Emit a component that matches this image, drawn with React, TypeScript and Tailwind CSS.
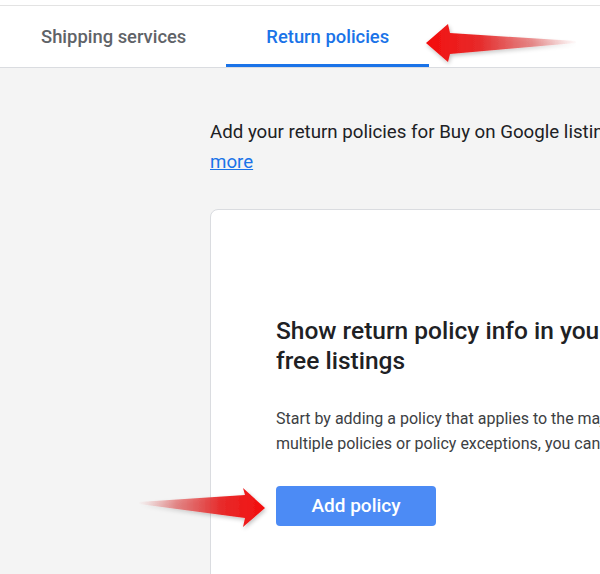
import React from "react";

function Arrows() {
  return (
    <svg
      className="absolute left-0 top-0 pointer-events-none"
      width="600"
      height="574"
      viewBox="0 0 600 574"
    >
      <defs>
        <linearGradient id="g1" gradientUnits="userSpaceOnUse" x1="426" y1="0" x2="578" y2="0">
          <stop offset="0" stopColor="#f40c0c" stopOpacity="1" />
          <stop offset="0.35" stopColor="#e72222" stopOpacity="0.95" />
          <stop offset="0.7" stopColor="#df4c4c" stopOpacity="0.6" />
          <stop offset="1" stopColor="#e07070" stopOpacity="0" />
        </linearGradient>
        <linearGradient id="g2" gradientUnits="userSpaceOnUse" x1="266" y1="0" x2="138" y2="0">
          <stop offset="0" stopColor="#f40c0c" stopOpacity="1" />
          <stop offset="0.35" stopColor="#e72222" stopOpacity="0.95" />
          <stop offset="0.7" stopColor="#df4c4c" stopOpacity="0.6" />
          <stop offset="1" stopColor="#e07070" stopOpacity="0" />
        </linearGradient>
        <filter id="sh" x="-20%" y="-50%" width="140%" height="200%">
          <feGaussianBlur in="SourceAlpha" stdDeviation="2" />
          <feOffset dx="1" dy="2" result="b" />
          <feComponentTransfer>
            <feFuncA type="linear" slope="0.25" />
          </feComponentTransfer>
          <feMerge>
            <feMergeNode />
            <feMergeNode in="SourceGraphic" />
          </feMerge>
        </filter>
      </defs>
      <polygon
        filter="url(#sh)"
        fill="url(#g1)"
        points="426,43 448,24 450,33 576,41 576,43 450,54 448,62"
      />
      <polygon
        filter="url(#sh)"
        fill="url(#g2)"
        points="265,508 243,488 245,495 139,502 139,504 245,518 243,527"
      />
    </svg>
  );
}

export default function App() {
  return (
    <div
      className="relative w-[600px] h-[574px] overflow-hidden bg-[#f4f4f4]"
      style={{ fontFamily: "Roboto, 'Noto Sans', Arial, sans-serif" }}
    >
      <div className="h-[5px] bg-white" />
      <div className="h-px bg-[#e3e3e3]" />
      <div className="flex h-[61px] bg-white pl-px border-b border-[#dadce0] box-content">
        <div className="flex h-full items-center px-10 text-[18.4px] font-medium text-[#5f6368] whitespace-nowrap">
          Shipping services
        </div>
        <div className="relative flex h-full items-center px-10 text-[18.4px] font-medium text-[#1a73e8] whitespace-nowrap">
          Return policies
          <div className="absolute left-0 right-0 bottom-0 h-[3px] bg-[#1a73e8]" />
        </div>
      </div>

      <div className="pl-[210px] pt-[49px]">
        <p className="text-[18.7px] leading-[30px] text-[#202124] whitespace-nowrap">
          Add your return policies for Buy on Google listings and free listings.{" "}
          <span className="text-[#1a73e8] underline">Learn</span>
          <br />
          <span className="text-[#1a73e8] underline">more</span>
        </p>

        <div className="mt-[32px] w-[600px] h-[400px] rounded-lg border border-[#dadce0] bg-white pl-[65px] pt-[106px]">
          <h2 className="text-[24.5px] leading-[30px] font-medium text-[#202124] whitespace-nowrap">
            Show return policy info in your ads and
            <br />
            free listings
          </h2>
          <p className="mt-[30px] text-[16px] leading-[25px] text-[#3c4043] whitespace-nowrap">
            Start by adding a policy that applies to the majority of your products. If you have
            <br />
            multiple policies or policy exceptions, you can add them later.
          </p>
          <button className="mt-[30px] h-10 w-[160px] rounded-[4px] bg-[#4c8bf5] text-[19px] font-medium text-white">
            Add policy
          </button>
        </div>
      </div>

      <Arrows />
    </div>
  );
}
